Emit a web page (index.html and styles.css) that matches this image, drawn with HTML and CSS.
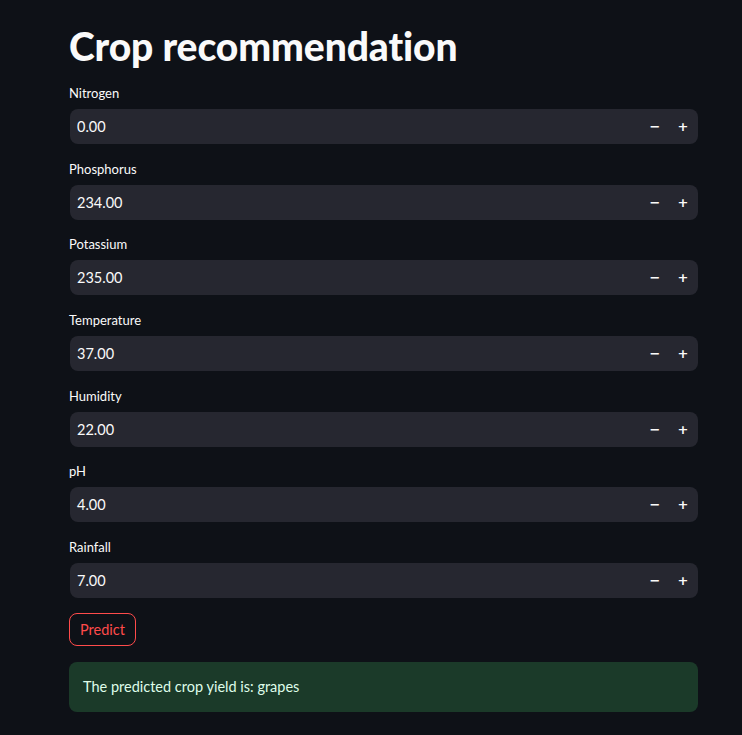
FILE: index.html
```html
<!DOCTYPE html>
<html>
<head>
<meta charset="utf-8">
<link rel="stylesheet" href="styles.css">
</head>
<body>
<main class="app">
  <h1 class="title">Crop recommendation</h1>
  <div class="field">
    <label class="label">Nitrogen</label>
    <div class="num"><span class="val">0.00</span><span class="step">&minus;</span><span class="step">+</span></div>
  </div>
  <div class="field">
    <label class="label">Phosphorus</label>
    <div class="num"><span class="val">234.00</span><span class="step">&minus;</span><span class="step">+</span></div>
  </div>
  <div class="field">
    <label class="label">Potassium</label>
    <div class="num"><span class="val">235.00</span><span class="step">&minus;</span><span class="step">+</span></div>
  </div>
  <div class="field">
    <label class="label">Temperature</label>
    <div class="num"><span class="val">37.00</span><span class="step">&minus;</span><span class="step">+</span></div>
  </div>
  <div class="field">
    <label class="label">Humidity</label>
    <div class="num"><span class="val">22.00</span><span class="step">&minus;</span><span class="step">+</span></div>
  </div>
  <div class="field">
    <label class="label">pH</label>
    <div class="num"><span class="val">4.00</span><span class="step">&minus;</span><span class="step">+</span></div>
  </div>
  <div class="field">
    <label class="label">Rainfall</label>
    <div class="num"><span class="val">7.00</span><span class="step">&minus;</span><span class="step">+</span></div>
  </div>
  <button class="btn">Predict</button>
  <div class="alert">The predicted crop yield is: grapes</div>
</main>
</body>
</html>
```
FILE: styles.css
```css
html, body {
  margin: 0;
  padding: 0;
  background: #0e1117;
  color: #fafafa;
  font-family: Lato, "Noto Sans", sans-serif;
}
.app {
  width: 629px;
  margin-left: 69px;
  padding-top: 22px;
}
.title {
  margin: 0 0 13px 0;
  font-size: 39px;
  font-weight: 900;
  line-height: 48px;
  letter-spacing: -0.1px;
}
.field {
  display: flex;
  flex-direction: column;
  margin-bottom: 14.67px;
}
.label {
  font-size: 13px;
  line-height: 20px;
  height: 20px;
  margin-bottom: 6px;
  display: flex;
  align-items: center;
}
.num {
  display: flex;
  align-items: center;
  height: 35px;
  margin-left: 1px;
  background: #262730;
  border-radius: 8px;
  padding-left: 7px;
  padding-right: 1px;
}
.val {
  flex: 1;
  font-size: 14.5px;
}
.step {
  width: 28px;
  text-align: center;
  font-family: "DejaVu Sans", sans-serif;
  font-size: 13px;
  font-weight: 700;
}
.btn {
  display: block;
  margin-top: 0;
  height: 33px;
  padding: 0 10px;
  background: transparent;
  border: 1px solid #ff4b4b;
  border-radius: 8px;
  color: #ff4b4b;
  font-family: inherit;
  font-size: 14.5px;
}
.alert {
  margin-top: 16px;
  height: 50px;
  box-sizing: border-box;
  padding: 0 14px;
  display: flex;
  align-items: center;
  background: #1b3a29;
  color: #dffde9;
  border-radius: 8px;
  font-size: 14.5px;
}
```
